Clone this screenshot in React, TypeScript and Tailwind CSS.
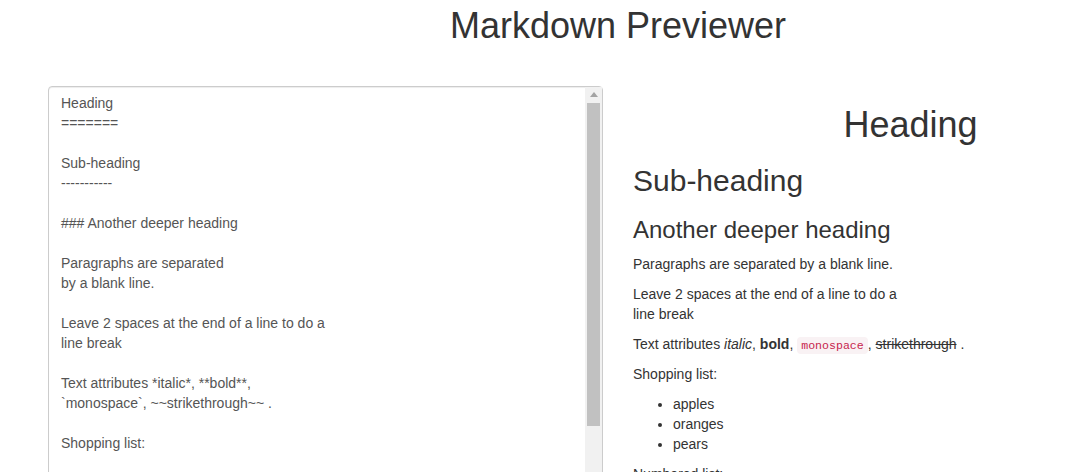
import { useState } from "react";

const initialMarkdown = `Heading
=======

Sub-heading
-----------

### Another deeper heading

Paragraphs are separated
by a blank line.

Leave 2 spaces at the end of a line to do a
line break

Text attributes *italic*, **bold**,
\`monospace\`, ~~strikethrough~~ .

Shopping list:

  * apples
  * oranges
  * pears

Numbered list:

  1. apples
  2. oranges
  3. pears
`;

function FakeScrollbar() {
  return (
    <div className="absolute top-[1px] right-[1px] bottom-[1px] w-[17px] bg-[#f1f1f1] flex flex-col">
      <div className="h-[16px] flex items-center justify-center">
        <svg width="8" height="5" viewBox="0 0 8 5">
          <path d="M0 5 L4 0 L8 5 Z" fill="#a3a3a3" />
        </svg>
      </div>
      <div className="mx-[2px] h-[323px] bg-[#c1c1c1]" />
    </div>
  );
}

export default function App() {
  const [markdown, setMarkdown] = useState(initialMarkdown);

  return (
    <div
      className="w-full min-h-screen overflow-hidden bg-white text-[14px] leading-[20px] text-[#333]"
      style={{ fontFamily: '"Liberation Sans", Arial, sans-serif' }}
    >
      <div className="w-[1170px] ml-[33px] pt-[6px]">
        <h1 className="text-center text-[36px] leading-[1.1] font-normal mb-[41px]">
          Markdown Previewer
        </h1>

        <div className="grid grid-cols-2">
          {/* Editor */}
          <div className="px-[15px]">
            <div className="relative -mt-[1px]">
              <textarea
                value={markdown}
                onChange={(e) => setMarkdown(e.target.value)}
                spellCheck={false}
                className="block w-full h-[620px] resize-none overflow-hidden rounded-[4px] border border-[#ccc] bg-white pl-[12px] pr-[30px] pt-[6px] pb-[6px] text-[14px] leading-[20px] text-[#555] shadow-[inset_0_1px_1px_rgba(0,0,0,0.075)] outline-none"
              />
              <FakeScrollbar />
            </div>
          </div>

          {/* Preview */}
          <div className="px-[15px]">
            <h1 className="text-center text-[36px] leading-[1.1] font-normal mt-[18px] mb-[10px]">
              Heading
            </h1>
            <h2 className="text-[30px] leading-[1.1] font-normal mt-[20px] mb-[10px]">Sub-heading</h2>
            <h3 className="text-[24px] leading-[1.1] font-normal mt-[20px] mb-[10px]">
              Another deeper heading
            </h3>
            <p className="mb-[10px]">Paragraphs are separated by a blank line.</p>
            <p className="mb-[10px]">
              Leave 2 spaces at the end of a line to do a
              <br />
              line break
            </p>
            <p className="mb-[10px]">
              Text attributes <em>italic</em>, <strong>bold</strong>,{" "}
              <code
                className="rounded-[4px] bg-[#f9f2f4] px-[4px] py-[2px] text-[11.6px] leading-[14px] text-[#c7254e]"
                style={{ fontFamily: '"Liberation Mono", Consolas, monospace' }}
              >
                monospace
              </code>
              , <del>strikethrough</del> .
            </p>
            <p className="mb-[10px]">Shopping list:</p>
            <ul className="list-disc pl-[40px] mb-[10px]">
              <li>apples</li>
              <li>oranges</li>
              <li>pears</li>
            </ul>
            <p className="mb-[10px]">Numbered list:</p>
            <ol className="list-decimal pl-[40px] mb-[10px]">
              <li>apples</li>
              <li>oranges</li>
              <li>pears</li>
            </ol>
          </div>
        </div>
      </div>
    </div>
  );
}
